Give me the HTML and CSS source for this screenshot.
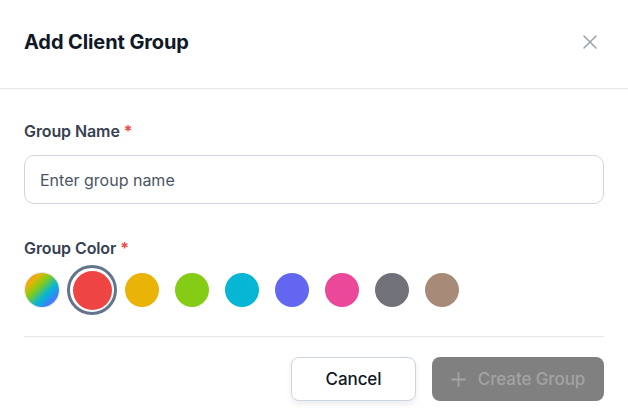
FILE: index.html
```html
<!DOCTYPE html>
<html>
<head>
<meta charset="utf-8">
<link rel="stylesheet" href="styles.css">
</head>
<body>
<div class="modal">
  <div class="header">
    <h2 class="title">Add Client Group</h2>
    <button class="close" aria-label="Close">
      <svg width="16" height="16" viewBox="0 0 16 16"><path d="M2 2L14 14M14 2L2 14" stroke="#9ca3af" stroke-width="1.6" stroke-linecap="round"/></svg>
    </button>
  </div>
  <div class="body">
    <div class="field">
      <label class="label">Group Name <span class="req">*</span></label>
      <input class="input" type="text" placeholder="Enter group name">
    </div>
    <div class="field field-color">
      <label class="label">Group Color <span class="req">*</span></label>
      <div class="swatches">
        <span class="swatch rainbow"></span>
        <span class="swatch-sel"><span class="swatch red big"></span></span>
        <span class="swatch yellow"></span>
        <span class="swatch lime"></span>
        <span class="swatch cyan"></span>
        <span class="swatch indigo"></span>
        <span class="swatch pink"></span>
        <span class="swatch gray"></span>
        <span class="swatch brown"></span>
      </div>
    </div>
    <div class="footer">
      <button class="btn btn-cancel">Cancel</button>
      <button class="btn btn-create"><svg class="plus" width="15" height="15" viewBox="0 0 15 15"><path d="M7.5 1V14M1 7.5H14" stroke="#a3a3a3" stroke-width="1.8" stroke-linecap="round"/></svg><span>Create Group</span></button>
    </div>
  </div>
</div>
</body>
</html>
```
FILE: styles.css
```css
* { box-sizing: border-box; }
html, body { margin: 0; background: #fff; }
body { font-family: "Inter", "Lato", sans-serif; width: 628px; height: 417px; overflow: hidden; }
.modal { width: 628px; }
.header {
  height: 89px;
  border-bottom: 1px solid #e5e7eb;
  display: flex;
  align-items: center;
  justify-content: space-between;
  padding: 0 24px 4px 24px;
}
.title { margin: 0; font-size: 20px; font-weight: 700; color: #111827; letter-spacing: -0.1px; }
.close { border: 0; background: none; padding: 0; width: 16px; height: 16px; display: flex; margin-right: 6px; }
.body { padding: 0 24px; }
.field { display: flex; flex-direction: column; }
.label { font-size: 16px; font-weight: 600; color: #374151; margin-top: 32px; line-height: 20px; letter-spacing: -0.1px; }
.req { color: #ef4444; }
.input {
  margin-top: 14px;
  height: 49px;
  border: 1px solid #d1d5db;
  border-radius: 10px;
  padding: 0 15px;
  font-family: inherit;
  font-size: 16px;
  color: #111827;
  outline: none;
}
.input::placeholder { color: #4b5563; }
.field-color .label { margin-top: 34px; }
.swatches { display: flex; align-items: center; gap: 16px; margin-top: 7px; height: 50px; padding-left: 1px; }
.swatch { width: 34px; height: 34px; border-radius: 50%; display: block; flex: none; }
.swatch-sel {
  width: 50px; height: 50px; border-radius: 50%;
  border: 3px solid #64748b;
  display: flex; align-items: center; justify-content: center;
  margin: 0 -8px; flex: none;
}
.swatch.big { width: 39px; height: 39px; }
.rainbow { background: linear-gradient(135deg, #f97316 0%, #eab308 22%, #84cc16 40%, #06b6d4 62%, #3b82f6 80%, #8b5cf6 100%); box-shadow: 0 0 0 1px #e5e7eb; }
.red { background: #ef4444; }
.yellow { background: #eab308; }
.lime { background: #84cc16; }
.cyan { background: #06b6d4; }
.indigo { background: #6366f1; }
.pink { background: #ec4899; }
.gray { background: #71717a; }
.brown { background: #a78a78; }
.footer {
  margin-top: 21px;
  border-top: 1px solid #e5e7eb;
  padding-top: 20px;
  display: flex;
  justify-content: flex-end;
  gap: 16px;
}
.btn { font-family: inherit; font-size: 17px; font-weight: 500; height: 44px; border-radius: 8px; cursor: pointer; letter-spacing: -0.1px; }
.btn-cancel {
  width: 125px; background: #fff; color: #111827;
  border: 1px solid #cbd5e1;
  box-shadow: 0 3px 6px rgba(0,0,0,0.08);
}
.btn-create {
  width: 172px; background: #808080; color: #a3a3a3; border: 0;
  display: flex; align-items: center; justify-content: center; gap: 12px;
}
.plus { flex: none; }
```
